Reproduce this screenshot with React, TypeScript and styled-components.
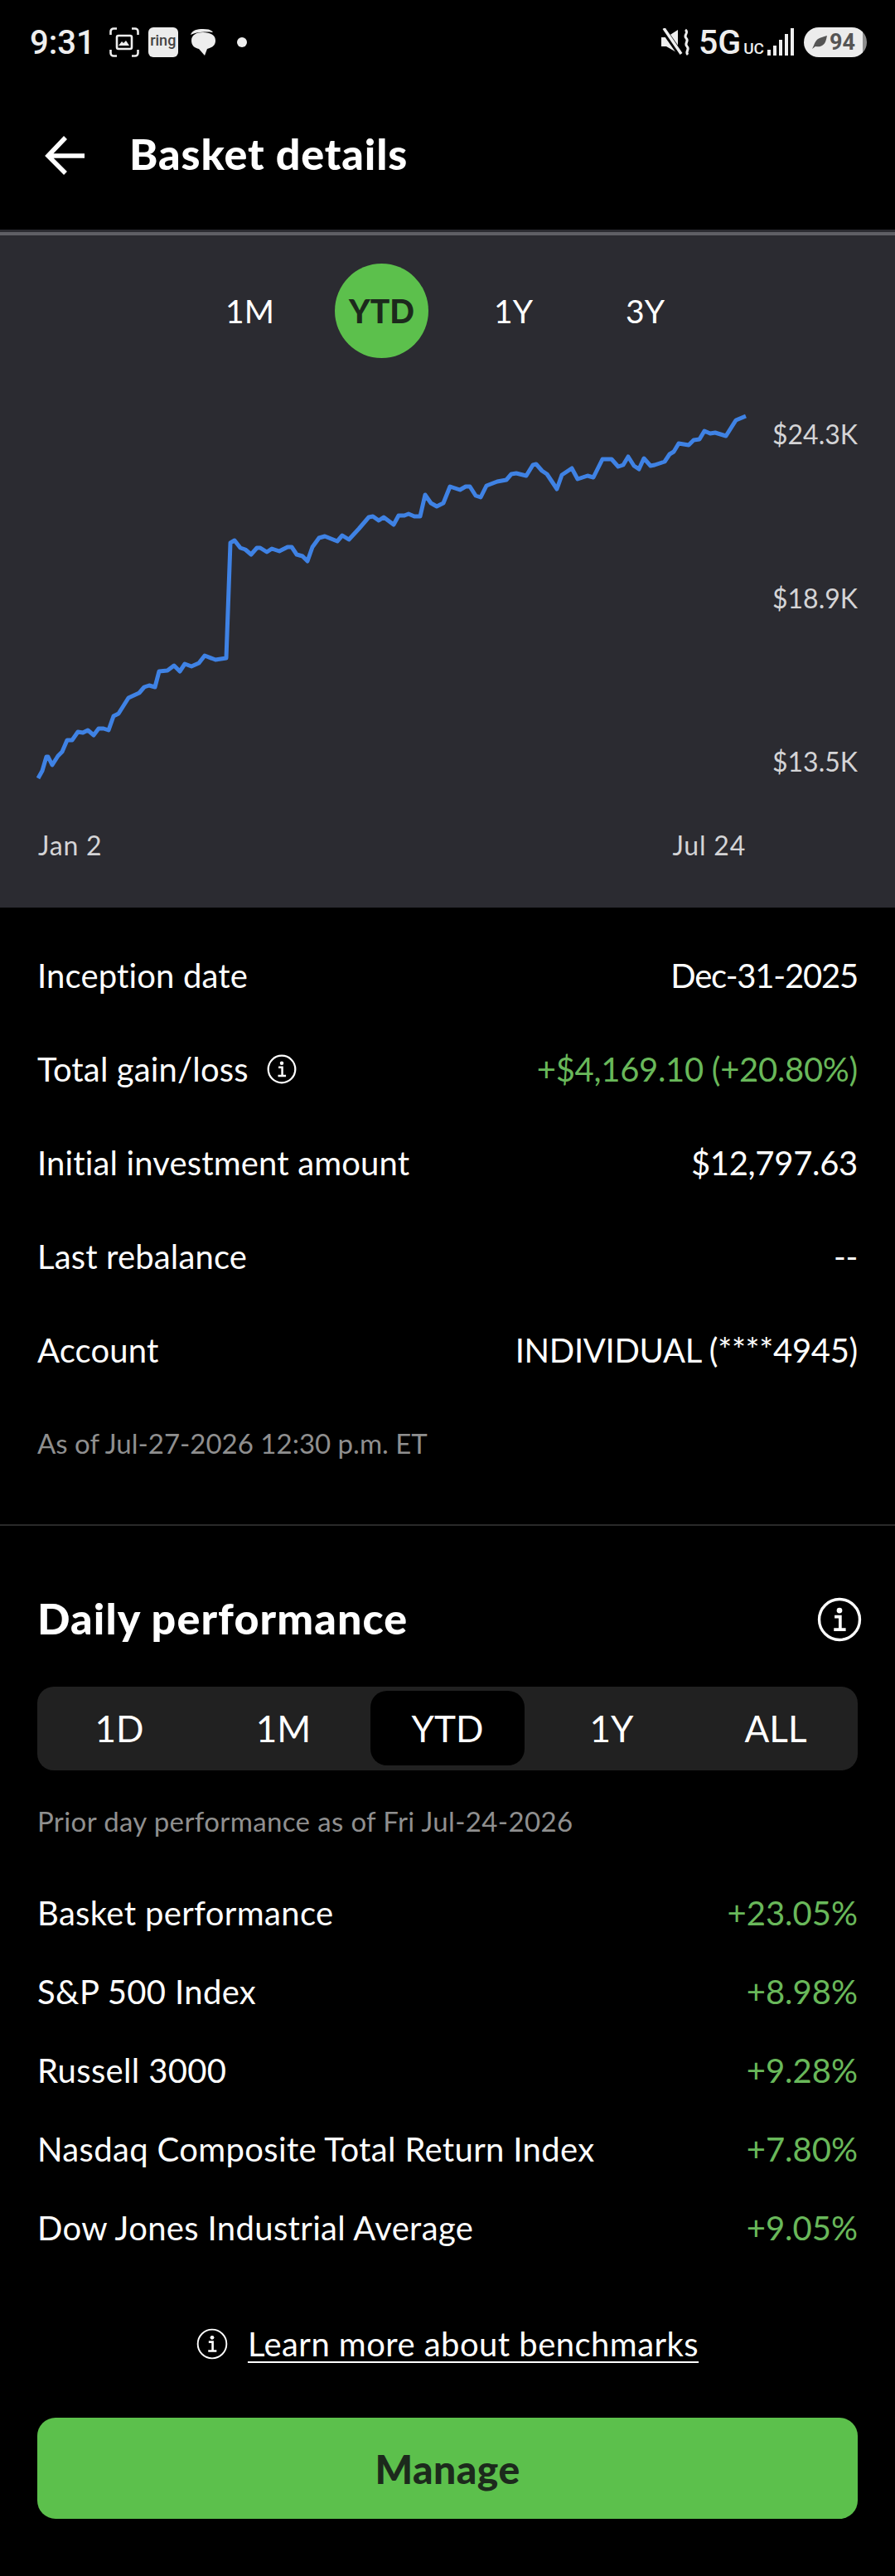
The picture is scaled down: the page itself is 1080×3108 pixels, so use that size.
import React from 'react'
import styled, { createGlobalStyle } from 'styled-components'

const FONT = `Lato, 'Open Sans', 'Liberation Sans', sans-serif`

const GlobalStyle = createGlobalStyle`
  html, body {
    margin: 0;
    padding: 0;
    background: #000000;
  }
  * {
    box-sizing: border-box;
  }
`

const Page = styled.div`
  width: 1080px;
  height: 3108px;
  background: #000000;
  color: #ffffff;
  font-family: ${FONT};
  overflow: hidden;
`

const StatusBar = styled.div`
  height: 100px;
  display: flex;
  align-items: center;
  justify-content: space-between;
  padding: 2px 34px 0 36px;
`

const StatusGroup = styled.div`
  display: flex;
  align-items: center;
`

const Clock = styled.span`
  font-family: Roboto, sans-serif;
  font-size: 40px;
  font-weight: 500;
  color: #eeeeee;
  margin-right: 17px;
`

const RingBadge = styled.span`
  width: 36px;
  height: 36px;
  margin-left: 11px;
  border-radius: 6px;
  background: #ececec;
  color: #444444;
  font-family: Roboto, sans-serif;
  font-size: 18px;
  font-weight: 500;
  line-height: 32px;
  text-align: center;
`

const NetLabel = styled.span`
  font-family: Roboto, sans-serif;
  font-size: 41px;
  font-weight: 500;
  color: #eeeeee;
  margin-left: 10px;
`

const NetSub = styled.span`
  font-family: Roboto, sans-serif;
  font-size: 19px;
  font-weight: 500;
  color: #eeeeee;
  margin: 14px 4px 0 3px;
`

const Battery = styled.div`
  width: 76px;
  height: 36px;
  margin-left: 11px;
  border-radius: 18px;
  background: linear-gradient(90deg, #ececec 94%, #8d8d8d 94%);
  color: #555555;
  font-family: Roboto, sans-serif;
  font-size: 27px;
  font-weight: 700;
  display: flex;
  align-items: center;
  padding-left: 9px;
  gap: 2px;
`

const Header = styled.div`
  height: 177px;
  display: flex;
  align-items: center;
  padding: 0 0 2px 54px;
  gap: 54px;
`

const Title = styled.h1`
  margin: 0 0 5px;
  font-size: 52px;
  font-weight: 900;
  line-height: 60px;
  letter-spacing: 0.9px;
`

const ChartPanel = styled.section`
  height: 818px;
  background: #2b2b31;
  padding-top: 3px;
`

const PanelRule = styled.div`
  height: 4px;
  background: #5f5f65;
`

const RangeTabs = styled.div`
  margin-top: 34px;
  display: flex;
  justify-content: center;
  gap: 46px;
`

const RangeTab = styled.div<{ $active?: boolean }>`
  width: 113px;
  height: 114px;
  border-radius: 50%;
  display: flex;
  align-items: center;
  justify-content: center;
  font-size: 39px;
  font-weight: ${p => (p.$active ? 900 : 400)};
  background: ${p => (p.$active ? '#5cc04c' : 'transparent')};
  color: ${p => (p.$active ? '#1c2a1c' : '#ffffff')};
`

const ChartBody = styled.div`
  margin-top: 58px;
  height: 460px;
  padding: 0 45px 0 40px;
  display: flex;
  justify-content: space-between;
`

const YAxis = styled.div`
  padding: 14px 0 11px;
  display: flex;
  flex-direction: column;
  justify-content: space-between;
  align-items: flex-end;
`

const AxisLabel = styled.span`
  font-size: 32px;
  line-height: 40px;
  color: #d4d4d6;
`

const XAxis = styled.div`
  margin: 50px 180px 0 46px;
  display: flex;
  justify-content: space-between;
  letter-spacing: 0.8px;
`

const DetailList = styled.section`
  padding: 26px 45px 78px;
  border-bottom: 2px solid #2a2a2a;
`

const DetailRow = styled.div`
  height: 113px;
  padding-bottom: 1px;
  display: flex;
  align-items: center;
  justify-content: space-between;
  font-size: 40px;
`

const RowLabel = styled.span`
  display: flex;
  align-items: center;
  gap: 22px;
  letter-spacing: 0.15px;
`

const DetailValue = styled.span<{ $gain?: boolean; $tight?: boolean }>`
  color: ${p => (p.$gain ? '#69b85a' : '#ffffff')};
  letter-spacing: ${p => (p.$tight ? '-1.200px' : '-0.300px')};
`

const Gain = styled.span`
  color: #69b85a;
`

const Note = styled.div`
  font-size: 33px;
  line-height: 40px;
  color: #8f8f8f;
`

const AsOf = styled(Note)`
  margin-top: 35px;
`

const Daily = styled.section`
  padding: 83px 45px 0;
`

const DailyHead = styled.div`
  height: 60px;
  padding-right: 3px;
  margin-right: -8px;
  display: flex;
  align-items: center;
  justify-content: space-between;
`

const DailyTitle = styled.h2`
  margin: 0 0 5px;
  font-size: 52px;
  font-weight: 900;
  letter-spacing: 1.1px;
`

const Segments = styled.div`
  margin-top: 51px;
  height: 101px;
  padding: 5px 6px 6px;
  border-radius: 20px;
  background: #212121;
  display: grid;
  grid-template-columns: repeat(5, 1fr);
  gap: 12px;
`

const Segment = styled.div<{ $active?: boolean }>`
  border-radius: 20px;
  display: flex;
  align-items: center;
  justify-content: center;
  font-size: 44px;
  background: ${p => (p.$active ? '#000000' : 'transparent')};
`

const PriorNote = styled(Note)`
  margin-top: 41px;
  margin-bottom: 45px;
  letter-spacing: 0.37px;
`

const IndexRow = styled.div`
  height: 95px;
  padding-bottom: 3px;
  display: flex;
  align-items: center;
  justify-content: space-between;
  font-size: 40px;
`

const IndexLabel = styled.span`
  letter-spacing: 0.35px;
`

const LearnMore = styled.div`
  margin-top: 71px;
  height: 40px;
  display: flex;
  align-items: center;
  justify-content: center;
  gap: 24px;
  font-size: 40px;
  letter-spacing: 0.45px;
`

const LearnLink = styled.span`
  text-decoration: underline;
  text-underline-offset: 6px;
  text-decoration-thickness: 2px;
`

const ManageButton = styled.button`
  display: block;
  width: 100%;
  height: 122px;
  margin-top: 69px;
  border: 0;
  border-radius: 22px;
  background: #5cc04c;
  color: #1c2a1c;
  font-family: ${FONT};
  font-size: 48px;
  font-weight: 900;
  letter-spacing: 0.5px;
`

const InfoIcon = ({ size, stroke = 2 }: { size: number; stroke?: number }) => (
  <svg width={size} height={size} viewBox="0 0 32 32" fill="none">
    <circle cx="16" cy="16" r={15 - stroke / 4} stroke="#fff" strokeWidth={stroke} />
    <circle cx="16" cy="9.5" r="2" fill="#fff" />
    <path d="M12.5 14h4v9M12 23.2h8.5" stroke="#fff" strokeWidth="2.2" />
  </svg>
)

const line = `46,939 51,930 56,913 58,913 63,923 70,912 75,907 81,893 87,893 94,883 100,884 106,881
113,887 119,879 125,879 131,881 137,864 143,861 155,842 168,836 174,829 180,827 187,829 192,810
202,809 210,803 217,810 223,801 231,804 240,800 247,791 260,796 273,794 278,655 283,652 290,661
296,663 303,669 310,661 314,661 322,666 328,662 337,665 347,660 352,660 358,669 365,671 371,677
377,660 385,649 392,647 407,653 413,646 421,651 433,638 445,624 450,623 457,628 463,624 475,633
481,622 488,622 493,620 500,623 507,623 513,597 520,607 527,611 535,607 543,587 555,591 562,587
567,587 574,598 580,600 587,586 600,581 611,579 617,572 623,571 635,574 643,561 647,560 654,568
660,572 672,590 678,573 690,565 697,578 709,574 716,576 727,554 738,554 746,563 752,561 758,551
765,562 771,566 777,553 785,562 790,561 802,557 808,548 813,545 819,535 831,537 837,531 844,530
850,520 857,523 863,522 876,526 888,507 900,502`

const details = [
  { label: 'Inception date', value: 'Dec-31-2025', tight: true },
  { label: 'Total gain/loss', value: '+$4,169.10 (+20.80%)', gain: true, info: true },
  { label: 'Initial investment amount', value: '$12,797.63' },
  { label: 'Last rebalance', value: '--' },
  { label: 'Account', value: 'INDIVIDUAL (****4945)' },
]

const indexes = [
  { label: 'Basket performance', value: '+23.05%' },
  { label: 'S&P 500 Index', value: '+8.98%' },
  { label: 'Russell 3000', value: '+9.28%' },
  { label: 'Nasdaq Composite Total Return Index', value: '+7.80%' },
  { label: 'Dow Jones Industrial Average', value: '+9.05%' },
]

const App = () => {
  return (
    <Page>
      <GlobalStyle />
      <StatusBar>
        <StatusGroup>
          <Clock>9:31</Clock>
          <svg width="36" height="36" viewBox="0 0 36 36" fill="none" stroke="#eee" strokeWidth="2.6">
            <path d="M1.5 9V5a3.5 3.5 0 0 1 3.5-3.5h4M27 1.5h4A3.5 3.5 0 0 1 34.500 5v4M1.500 27v4A3.500 3.500 0 0 0 5 34.500h4M27 34.500h4a3.500 3.500 0 0 0 3.500-3.500v-4" />
            <rect x="9" y="10" width="18" height="16" rx="2" />
            <path d="M11 22l4-5 2 2 3-3 4 6z" fill="#eee" stroke="none" />
          </svg>
          <RingBadge>ring</RingBadge>
          <svg width="32" height="34" viewBox="0 0 32 34" style={{ marginLeft: 14 }}>
            <path d="M1 8C3 2 9 1 16 1c6 0 10 1 12 4-6-1-20-1-27 3z" fill="#eee" />
            <path d="M2 15C2 8 8 5 16 5s15 3 15 10-6 9-10 10l-3 8-7-8C6 24 2 21 2 15z" fill="#eee" />
          </svg>
          <svg width="12" height="12" viewBox="0 0 12 12" style={{ marginLeft: 25 }}>
            <circle cx="6" cy="6" r="6" fill="#eee" />
          </svg>
        </StatusGroup>
        <StatusGroup>
          <svg width="35" height="34" viewBox="0 0 35 34" fill="#eee">
            <path d="M0 11h6L20 2v28L6 22H0z" />
            <path d="M2 1l21 30" stroke="#000" strokeWidth="7" />
            <path d="M3 0l21 31" stroke="#eee" strokeWidth="3.500" />
            <path d="M29 2c5 4-3 6 1 10s-3 6 1 10-3 6 1 10" fill="none" stroke="#eee" strokeWidth="3" />
          </svg>
          <NetLabel>5G</NetLabel>
          <NetSub>UC</NetSub>
          <svg width="33" height="34" viewBox="0 0 33 34" fill="#eee">
            <rect x="0" y="26" width="4" height="7" />
            <rect x="7" y="21" width="4" height="12" />
            <rect x="14" y="14" width="4" height="19" />
            <rect x="21" y="7" width="4" height="26" />
            <rect x="28" y="0" width="4" height="33" />
          </svg>
          <Battery>
            <svg width="20" height="18" viewBox="0 0 20 18" fill="#555">
              <path d="M1 17C3 14 4 8 8 5c3-2 8-3 11-4-1 5-2 10-6 12-3 2-6 1-8 1z" />
            </svg>
            94
          </Battery>
        </StatusGroup>
      </StatusBar>

      <Header>
        <svg width="48" height="48" viewBox="0 0 48 48" fill="none" stroke="#fff" strokeWidth="5.500">
          <path d="M48 24H4M25 2L4 24l21 21" />
        </svg>
        <Title>Basket details</Title>
      </Header>

      <ChartPanel>
        <PanelRule />
        <RangeTabs>
          <RangeTab>1M</RangeTab>
          <RangeTab $active>YTD</RangeTab>
          <RangeTab>1Y</RangeTab>
          <RangeTab>3Y</RangeTab>
        </RangeTabs>
        <ChartBody>
          <svg width="870" height="460" viewBox="40 490 870 460" fill="none">
            <polyline points={line} stroke="#3f82e4" strokeWidth="5" strokeLinejoin="round" />
          </svg>
          <YAxis>
            <AxisLabel>$24.3K</AxisLabel>
            <AxisLabel>$18.9K</AxisLabel>
            <AxisLabel>$13.5K</AxisLabel>
          </YAxis>
        </ChartBody>
        <XAxis>
          <AxisLabel>Jan 2</AxisLabel>
          <AxisLabel>Jul 24</AxisLabel>
        </XAxis>
      </ChartPanel>

      <DetailList>
        {details.map(row => (
          <DetailRow key={row.label}>
            <RowLabel>
              {row.label}
              {row.info && <InfoIcon size={36} />}
            </RowLabel>
            <DetailValue $gain={row.gain} $tight={row.tight}>{row.value}</DetailValue>
          </DetailRow>
        ))}
        <AsOf>As of Jul-27-2026 12:30 p.m. ET</AsOf>
      </DetailList>

      <Daily>
        <DailyHead>
          <DailyTitle>Daily performance</DailyTitle>
          <InfoIcon size={54} stroke={2} />
        </DailyHead>
        <Segments>
          <Segment>1D</Segment>
          <Segment>1M</Segment>
          <Segment $active>YTD</Segment>
          <Segment>1Y</Segment>
          <Segment>ALL</Segment>
        </Segments>
        <PriorNote>Prior day performance as of Fri Jul-24-2026</PriorNote>
        {indexes.map(row => (
          <IndexRow key={row.label}>
            <IndexLabel>{row.label}</IndexLabel>
            <Gain>{row.value}</Gain>
          </IndexRow>
        ))}
        <LearnMore>
          <InfoIcon size={38} stroke={1.600} />
          <LearnLink>Learn more about benchmarks</LearnLink>
        </LearnMore>
        <ManageButton>Manage</ManageButton>
      </Daily>
    </Page>
  )
}

export default App
